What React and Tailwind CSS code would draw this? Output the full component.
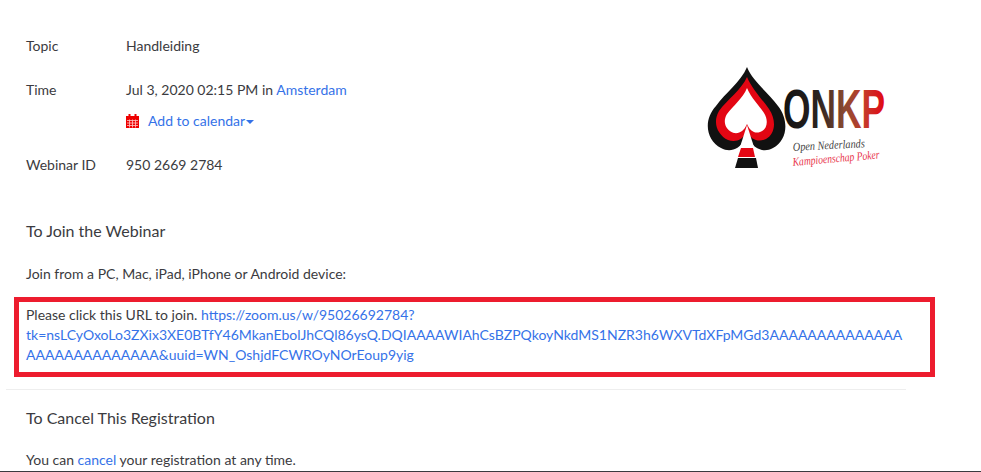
import React from "react";

function CalIcon() {
  return (
    <svg width="14" height="15" viewBox="0 0 14 15" className="mr-2">
      <rect x="0" y="2" width="13" height="12" fill="#ee0000" />
      <rect x="2.5" y="0" width="2" height="3" fill="#ee0000" />
      <rect x="8.5" y="0" width="2" height="3" fill="#ee0000" />
      <path d="M1 6.5h11M1 9h11M1 11.5h11M3.5 5.5v8M6.5 5.5v8M9.5 5.5v8" stroke="#ffc0c0" strokeWidth="0.8" />
    </svg>
  );
}

function Logo() {
  return (
    <svg width="210" height="125" viewBox="0 0 210 125" className="block">
      <defs>
        <linearGradient id="onkp" x1="0" x2="1" y1="0" y2="0">
          <stop offset="0" stopColor="#111111" />
          <stop offset="0.35" stopColor="#2a2320" />
          <stop offset="0.6" stopColor="#8a4a32" />
          <stop offset="0.8" stopColor="#c53a2a" />
          <stop offset="1" stopColor="#e30613" />
        </linearGradient>
      </defs>
      <path d="M57 12C63 27 79 38 88 51C99 65 98 85 83 93C74 98 65 94 60 86L57 78L54 86C49 94 40 98 31 93C16 85 13 65 26 51C35 38 51 27 57 12Z" fill="#111111" />
      <path d="M57 22C62 34 72 44 79 54C87 66 85 79 76 84C68 88 61 84 58 78L57 76L56 78C53 84 46 88 38 85C28 80 22 68 29 56C37 45 52 34 57 22Z" fill="#e30613" />
      <path d="M57 33C61 43 69 50 74 58C79 66 77 75 70 77C64 79 60 75 58 71L57 69L56 71C54 75 50 79 44 78C36 76 32 67 37 59C43 51 53 43 57 33Z" fill="#ffffff" />
      <path d="M57 70L64 92L50 92Z" fill="#ffffff" />
      <path d="M51 93L63 93L65 102L48 102Z" fill="#e30613" />
      <path d="M48 103L66 103L68 113L45 113Z" fill="#111111" />
      <text x="0" y="0" transform="translate(93 73) scale(0.93 1.44)" fontFamily="'Liberation Sans', sans-serif" fontWeight="700" fontSize="38" fill="url(#onkp)">ONKP</text>
      <text x="103" y="96" transform="rotate(-3 103 96)" textLength="72" lengthAdjust="spacingAndGlyphs" fontFamily="'Liberation Serif', serif" fontStyle="italic" fontSize="12" fill="#444444">Open Nederlands</text>
      <text x="103" y="111" transform="rotate(-5 103 111)" textLength="87" lengthAdjust="spacingAndGlyphs" fontFamily="'Liberation Serif', serif" fontStyle="italic" fontSize="12" fill="#e8344a">Kampioenschap Poker</text>
    </svg>
  );
}

export default function App() {
  return (
    <div className="h-[472px] w-[981px] overflow-hidden bg-white border-b border-[#3a3a3f] font-['Lato','Liberation_Sans',sans-serif] text-[14px] leading-[20px] text-[#3b3b40]">
      <div className="flex justify-between w-[874px] ml-[26px] pt-[36px] h-[184px]">
        <div className="w-[500px]">
          <div className="flex">
            <div className="w-[100px]">Topic</div>
            <div>Handleiding</div>
          </div>
          <div className="flex mt-[24px]">
            <div className="w-[100px]">Time</div>
            <div>
              <div>
                Jul 3, 2020 02:15 PM in <span className="text-[#3572e8]">Amsterdam</span>
              </div>
              <div className="flex items-center mt-[11px] text-[#3572e8]">
                <CalIcon />
                <span>Add to calendar</span>
                <span className="ml-[1px] mt-[1px] border-x-[4px] border-x-transparent border-t-[4px] border-t-[#3572e8]" />
              </div>
            </div>
          </div>
          <div className="flex mt-[24px]">
            <div className="w-[100px]">Webinar ID</div>
            <div>950 2669 2784</div>
          </div>
        </div>
        <div className="mt-[19px]">
          <Logo />
        </div>
      </div>

      <div className="mt-[36px] ml-[26px] text-[16px] leading-[22px]">To Join the Webinar</div>
      <div className="mt-[22px] ml-[26px]">Join from a PC, Mac, iPad, iPhone or Android device:</div>

      <div className="mt-[13px] ml-[14px] w-[921px] h-[80px] border-[5px] border-[#ed1c2e] pl-[7px] pt-[3px] whitespace-nowrap">
        Please click this URL to join.{" "}
        <span className="text-[#3572e8]">
          https://zoom.us/w/95026692784?
          <br />
          tk=nsLCyOxoLo3ZXix3XE0BTfY46MkanEbolJhCQl86ysQ.DQIAAAAWIAhCsBZPQkoyNkdMS1NZR3h6WXVTdXFpMGd3AAAAAAAAAAAAAA
          <br />
          AAAAAAAAAAAAAA&amp;uuid=WN_OshjdFCWROyNOrEoup9yig
        </span>
      </div>

      <div className="mt-[12px] ml-[6px] w-[900px] border-t border-[#eeeeee]" />
      <div className="mt-[17px] ml-[26px] text-[16px] leading-[22px]">To Cancel This Registration</div>
      <div className="mt-[21px] ml-[26px]">
        You can <span className="text-[#3572e8]">cancel</span> your registration at any time.
      </div>
    </div>
  );
}
